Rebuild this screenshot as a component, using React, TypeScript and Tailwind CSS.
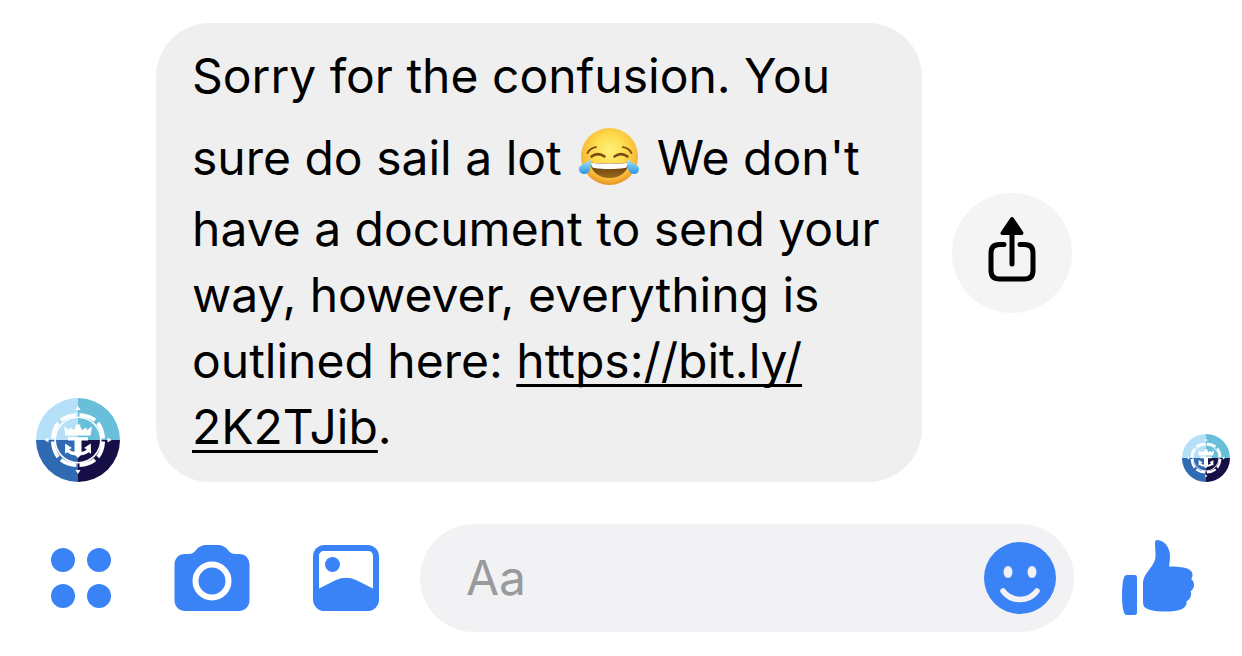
import React from "react";

function Crest({ className }: { className: string }) {
  return (
    <svg viewBox="0 0 84 84" className={className} role="img" aria-label="Royal Caribbean">
      <clipPath id="disc">
        <circle cx="42" cy="42" r="42" />
      </clipPath>
      <g clipPath="url(#disc)">
        <path fill="#b5e0f7" d="M0 0h42v42H0z" />
        <path fill="#69bfd9" d="M42 0h42v42H42z" />
        <path fill="#2f6ab3" d="M0 42h42v42H0z" />
        <path fill="#150f45" d="M42 42h42v42H42z" />
      </g>
      <g fill="none" stroke="#fff">
        <circle cx="42" cy="42" r="22.800" strokeWidth="1.600" />
        <path
          strokeWidth="3.800"
          d="M25 22.200Q31 17.500 40.500 16.800M43.500 16.800Q53 17.500 59 22.200M61.800 25Q66.500 31 67.200 40.500M67.200 43.500Q66.500 53 61.800 59M59 61.800Q53 66.500 43.500 67.200M40.500 67.200Q31 66.500 25 61.800M22.200 59Q17.500 53 16.800 43.500M16.800 40.500Q17.500 31 22.200 25"
        />
      </g>
      <g fill="#fff">
        <path d="M42 8l2.500 4h-5zM42 76l2.500-4h-5zM8.500 42l4-2.500v5zM75.500 42l-4-2.500v5z" />
        <path d="M28 28.500l5 3.500 1-2.500 4 2.500 2-4-.7-1.500h5.400L44 28l2 4 4-2.500 1 2.500 5-3.500-1.500 9h-25z" />
        <path d="M32 39.300h20v3.200h-6.500v11.300c2.300-.4 4.200-1.300 5.300-2.600L48 50l6.800-4.500.2 10.200-2.300-1.500c-2.200 2-5 2.800-8.200 3.200L42 60l-2.500-2.600c-3.200-.4-6-1.200-8.200-3.200L29 55.700l.2-10.200L36 50l-2.800 1.200c1.100 1.300 3 2.200 5.300 2.600V42.500H32z" />
      </g>
    </svg>
  );
}

function JoyFace() {
  return (
    <svg viewBox="0 0 60 60" className="h-15 w-15" role="img" aria-label="face with tears of joy">
      <defs>
        <radialGradient id="face" cx="50%" cy="40%" r="62%">
          <stop offset="0" stopColor="#fff27a" />
          <stop offset=".45" stopColor="#fedb4d" />
          <stop offset=".8" stopColor="#f8b838" />
          <stop offset="1" stopColor="#e68a24" />
        </radialGradient>
        <linearGradient id="mouth" x1="0" y1="0" x2="0" y2="1">
          <stop offset="0" stopColor="#5c3409" />
          <stop offset="1" stopColor="#9a6a1c" />
        </linearGradient>
        <linearGradient id="tear" x1="0" y1="0" x2="0" y2="1">
          <stop offset="0" stopColor="#a9e4fb" />
          <stop offset=".5" stopColor="#62bff2" />
          <stop offset="1" stopColor="#2f94dd" />
        </linearGradient>
      </defs>
      <circle cx="30.500" cy="29.500" r="28.500" fill="url(#face)" />
      <g fill="none" stroke="#7a4a12" strokeLinecap="round" strokeWidth="1.800">
        <path d="M8.500 26c1.800-3.300 4.500-5.300 8.500-5.800M52.500 26c-1.800-3.300-4.500-5.300-8.500-5.800" />
        <path d="M12.500 29.500c4-3 9-3 13 0M35.500 29.500c4-3 9-3 13 0" strokeWidth="2.600" />
      </g>
      <path d="M11.500 35.500c10 1.200 28 1.200 38 0C49 45 41 51 30.500 51S12 45 11.500 35.500z" fill="url(#mouth)" />
      <path d="M12 35.700c10 1.200 27 1.200 37 0-.2 3.500-1.200 5-3.500 5.400-9 1.300-21 1.300-30 0-2.300-.4-3.300-1.900-3.500-5.400z" fill="#fff" />
      <path d="M11.500 32.500c.6 6.500.2 12.500-3.600 14C4 48 0 45.700 0 42.200c0-4.200 6-5.500 11.500-9.700z" fill="url(#tear)" />
      <path d="M49 32.500c-.6 6.500-.2 12.500 3.600 14 3.900 1.500 7.400-.8 7.400-4.300 0-4.200-5.500-5.500-11-9.700z" fill="url(#tear)" />
    </svg>
  );
}

function ShareIcon() {
  return (
    <svg viewBox="0 0 48 66" className="h-[66px] w-12" aria-hidden="true">
      <g fill="none" stroke="#000" strokeWidth="5" strokeLinecap="round" strokeLinejoin="round">
        <path d="M16 28.500h-4.500c-6 0-8.500 3-8.500 8.500v17.500c0 5.500 3 8.500 8.500 8.500h25c5.500 0 8.500-3 8.500-8.500V37c0-5.500-2.500-8.500-8.500-8.500H32" />
        <path d="M24 14v34" />
        <path d="M24 3L14.500 17h19z" fill="#000" strokeWidth="4" />
      </g>
    </svg>
  );
}

function DotsIcon() {
  return (
    <svg viewBox="0 0 60 60" className="h-15 w-15" fill="currentColor" aria-hidden="true">
      <circle cx="12" cy="12" r="12" />
      <circle cx="48" cy="12" r="12" />
      <circle cx="12" cy="48" r="12" />
      <circle cx="48" cy="48" r="12" />
    </svg>
  );
}

function CameraIcon() {
  return (
    <svg viewBox="0 0 76 66" className="h-[66px] w-[76px]" fill="currentColor" aria-hidden="true">
      <path d="M11 9h3.500c3.500 0 5.500-1.500 8-4.500C25 1.500 28 0 32 0h12c4 0 7 1.500 9.500 4.500 2.500 3 4.500 4.500 8 4.500H65c6.500 0 10.500 4.500 10.500 11v35c0 6.500-4.500 11-11 11h-53C5 66 .5 61.500.5 55V20C.5 13.500 4.500 9 11 9z" />
      <circle cx="38" cy="36" r="16.500" fill="none" stroke="#fff" strokeWidth="6" />
    </svg>
  );
}

function PictureIcon() {
  return (
    <svg viewBox="0 0 66 66" className="h-[66px] w-[66px]" aria-hidden="true">
      <rect width="66" height="66" rx="11.500" fill="currentColor" />
      <path d="M11 6h44c3 0 5 2 5 5v32.500L43.500 35.200c-7-3.300-14-3.300-21 0L6 43.500V11c0-3 2-5 5-5z" fill="#fff" />
      <circle cx="19.500" cy="19.500" r="7.500" fill="currentColor" />
    </svg>
  );
}

function SmileIcon() {
  return (
    <svg viewBox="0 0 72 72" className="h-18 w-18" aria-hidden="true">
      <circle cx="36" cy="36" r="36" fill="currentColor" />
      <ellipse cx="24" cy="30" rx="4.500" ry="6" fill="#f2f2f5" />
      <ellipse cx="48" cy="30" rx="4.500" ry="6" fill="#f2f2f5" />
      <path d="M19 49c4 5.300 10 8.500 17 8.500S49 54.300 53 49" fill="none" stroke="#f2f2f5" strokeWidth="5.500" strokeLinecap="round" />
    </svg>
  );
}

function LikeIcon() {
  return (
    <svg viewBox="0 1 72 76" className="h-19 w-18" fill="currentColor" aria-hidden="true">
      <path d="M5 36h7.500c1.700 0 2.500.8 2.500 2.500v35c0 1.700-.8 2.500-2.500 2.500H5c-1.700 0-2.500-1-3.200-3C.5 69 0 63 0 56s.5-13 1.800-17C2.500 37 3.300 36 5 36z" />
      <path d="M33 3.500C33 1.500 34.500.7 37 1.200 43.500 2.500 48 9 48 17c0 4-.6 7.500-1 10.500 7 0 14 .5 18 2 4 1.400 5.500 3.800 5.500 6.500 0 1.500-.5 2.800-1.300 4 1.900 1.500 2.800 3.700 2.800 6 0 2.600-1.200 4.900-3.300 6.300.5 1.200.5 2.400.3 3.700-.4 3-2 5.200-4.500 6.200.2 1 .2 2-.2 3-1.500 5-8 7.300-20.300 7.300-8 0-14-.8-18-2.300-3.500-1.300-5-3.200-5-6.700V44c0-4.500 2-7.500 4.500-11 3.500-5 8-9.500 8-16 0-5-.5-10-.5-13.500z" />
    </svg>
  );
}

export default function App() {
  return (
    <main className="min-h-screen bg-white font-['Inter','Liberation_Sans',sans-serif] text-black">
      <section className="flex items-end pt-[23px] pr-3 pl-9">
        <Crest className="h-21 w-21 shrink-0" />
        <div className="ml-9 flex min-w-0 items-center gap-[30px]">
          <p className="w-full max-w-[766px] rounded-[54px] bg-[#efefef] pt-5 pr-8 pb-[22px] pl-9 text-[48px] leading-[66px]">
            Sorry for the confusion. You sure do sail a lot{" "}
            <span className="inline-block px-1 pt-[18px] pb-[9px] align-[-21px]">
              <JoyFace />
            </span>{" "}
            We don't have a document to send your way, however, everything is outlined here:{" "}
            <a
              href="https://bit.ly/2K2TJib"
              className="underline decoration-3 underline-offset-6 [text-decoration-skip-ink:none]"
            >
              https://bit.ly/
              <wbr />
              2K2TJib
            </a>
            .
          </p>
          <button
            type="button"
            aria-label="Share"
            className="flex h-30 w-30 shrink-0 items-center justify-center rounded-full bg-[#f4f4f4] pb-2"
          >
            <ShareIcon />
          </button>
        </div>
        <Crest className="ml-auto h-12 w-12 shrink-0" />
      </section>

      <form
        className="mt-[42px] flex items-center pr-12 pl-[51px] text-[#3a83f7]"
        onSubmit={(e) => e.preventDefault()}
      >
        <div className="flex shrink-0 items-center gap-[63px]">
          <button type="button" aria-label="More">
            <DotsIcon />
          </button>
          <button type="button" aria-label="Camera">
            <CameraIcon />
          </button>
          <button type="button" aria-label="Photos">
            <PictureIcon />
          </button>
        </div>
        <div className="ml-[41px] flex h-27 min-w-0 flex-1 items-center rounded-full bg-[#f2f2f5] pr-[18px] pl-[46px]">
          <input
            type="text"
            aria-label="Message"
            placeholder="Aa"
            className="min-w-0 flex-1 bg-transparent text-[48px] leading-[66px] text-black outline-none placeholder:text-[#9a9a9c]"
          />
          <button type="button" aria-label="Emoji" className="shrink-0">
            <SmileIcon />
          </button>
        </div>
        <button type="button" aria-label="Like" className="ml-12 shrink-0">
          <LikeIcon />
        </button>
      </form>
    </main>
  );
}
